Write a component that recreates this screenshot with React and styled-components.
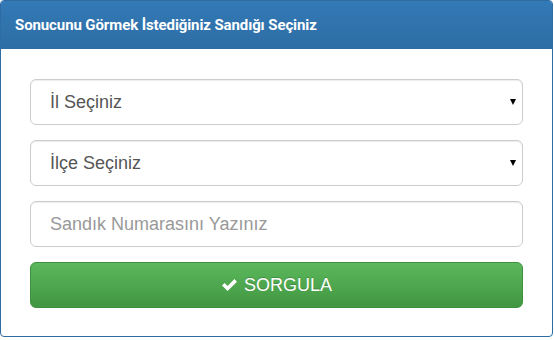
import React from "react";
import styled, { createGlobalStyle } from "styled-components";

const Global = createGlobalStyle`
  html, body { margin: 0; padding: 0; background: #fff; }
  body { font-family: "Liberation Sans", Arial, sans-serif; }
  * { box-sizing: border-box; }
`;

const Panel = styled.div`
  width: 553px;
  height: 337px;
  border: 1px solid #2e6da4;
  border-radius: 4px;
  overflow: hidden;
  background: #fff;
  display: flex;
  flex-direction: column;
`;

const Heading = styled.div`
  height: 48px;
  flex: none;
  display: flex;
  align-items: center;
  padding: 0 14px;
  background: linear-gradient(to bottom, #337ab7 0%, #2e6da4 100%);
  border-bottom: 1px solid #2e6da4;
  color: #fff;
  font-family: Roboto, "Liberation Sans", Arial, sans-serif;
  font-weight: 700;
  font-size: 15px;
  letter-spacing: -0.1px;
`;

const Body = styled.div`
  padding: 30px 29px 30px 29px;
  display: flex;
  flex-direction: column;
  gap: 15px;
`;

const SelectWrap = styled.div`
  position: relative;
  &::after {
    content: "";
    position: absolute;
    right: 7px;
    top: 20px;
    border-left: 3.5px solid transparent;
    border-right: 3.5px solid transparent;
    border-top: 6px solid #000;
  }
`;

const baseField = `
  display: block;
  width: 100%;
  height: 46px;
  border: 1px solid #ccc;
  border-radius: 6px;
  background: #fff;
  font-family: "Liberation Sans", Arial, sans-serif;
  font-size: 18px;
  color: #555;
  padding: 0 19px;
  outline: none;
  box-shadow: inset 0 1px 1px rgba(0,0,0,0.075);
`;

const Select = styled.select`
  ${baseField}
  appearance: none;
  -webkit-appearance: none;
`;

const Input = styled.input`
  ${baseField}
  &::placeholder { color: #999; }
`;

const Button = styled.button`
  height: 46px;
  width: 100%;
  border: 1px solid #3e8f3e;
  border-radius: 6px;
  background: linear-gradient(to bottom, #5cb85c 0%, #419641 100%);
  color: #fff;
  font-family: "Liberation Sans", Arial, sans-serif;
  font-size: 18px;
  display: flex;
  align-items: center;
  justify-content: center;
  gap: 6px;
  text-shadow: 0 -1px 0 rgba(0,0,0,0.2);
  padding: 0;
`;

const Check = () => (
  <svg width="17" height="14" viewBox="0 0 17 14">
    <path d="M1 7.5 L3.6 4.9 L6.6 7.9 L13.4 1.1 L16 3.7 L6.6 13.1 Z" fill="#fff" />
  </svg>
);

export default function App() {
  return (
    <>
      <Global />
      <Panel>
        <Heading>Sonucunu Görmek İstediğiniz Sandığı Seçiniz</Heading>
        <Body>
          <SelectWrap>
            <Select defaultValue="">
              <option value="">İl Seçiniz</option>
            </Select>
          </SelectWrap>
          <SelectWrap>
            <Select defaultValue="">
              <option value="">İlçe Seçiniz</option>
            </Select>
          </SelectWrap>
          <Input placeholder="Sandık Numarasını Yazınız" />
          <Button>
            <Check />
            SORGULA
          </Button>
        </Body>
      </Panel>
    </>
  );
}
